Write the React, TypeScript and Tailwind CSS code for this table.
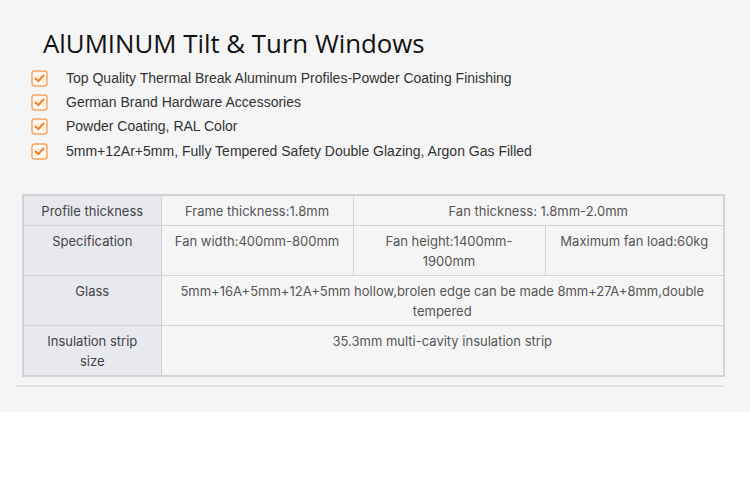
import React from "react";

const Check = () => (
  <svg width="17" height="17" viewBox="0 0 17 17" className="shrink-0">
    <rect x="1" y="1" width="15" height="15" rx="2.5" fill="#fff6ee" stroke="#f7a25c" strokeWidth="1.4" />
    <path d="M4.6 8.6 L7.3 11.1 L12.4 5.6" fill="none" stroke="#f27a1a" strokeWidth="2" strokeLinecap="round" strokeLinejoin="round" />
  </svg>
);

const items = [
  "Top Quality Thermal Break Aluminum Profiles-Powder Coating Finishing",
  "German Brand Hardware Accessories",
  "Powder Coating, RAL Color",
  "5mm+12Ar+5mm, Fully Tempered Safety Double Glazing, Argon Gas Filled",
];

const th = "border border-[#d3d3d3] bg-[#e8e8ef] text-[#444] align-top text-center px-2 pt-[5px] pb-[4px] font-normal";
const td = "border border-[#d3d3d3] text-[#555] align-top text-center px-2 pt-[5px] pb-[4px]";

export default function App() {
  return (
    <div className="w-[750px] h-[478px] bg-white">
      <div className="h-[412px] bg-[#f5f5f5] pt-[26px]">
        <h1
          className="ml-[43px] text-[25.8px] leading-[34px] text-[#111]"
          style={{ fontFamily: '"Open Sans", sans-serif' }}
        >
          AlUMINUM Tilt &amp; Turn Windows
        </h1>
        <ul className="mt-[10px] ml-[31px] flex flex-col gap-[7.2px]" style={{ fontFamily: '"Liberation Sans", Arial, sans-serif' }}>
          {items.map((t) => (
            <li key={t} className="flex items-center h-[17px] text-[14px] text-[#333]">
              <Check />
              <span className="ml-[18px]">{t}</span>
            </li>
          ))}
        </ul>
        <table
          className="mt-[34px] ml-[22px] w-[703px] border-collapse table-fixed text-[13px] leading-[20px] border-2 border-[#d3d3d3]"
          style={{ fontFamily: 'Inter, sans-serif' }}
        >
          <colgroup>
            <col className="w-[138px]" />
            <col className="w-[192px]" />
            <col className="w-[192px]" />
            <col />
          </colgroup>
          <tbody>
            <tr>
              <th className={th}>Profile thickness</th>
              <td className={td}>Frame thickness:1.8mm</td>
              <td className={td} colSpan={2}>Fan thickness: 1.8mm-2.0mm</td>
            </tr>
            <tr>
              <th className={th}>Specification<br />&nbsp;</th>
              <td className={td}>Fan width:400mm-800mm</td>
              <td className={td}>Fan height:1400mm-<br />1900mm</td>
              <td className={td}>Maximum fan load:60kg</td>
            </tr>
            <tr>
              <th className={th}>Glass<br />&nbsp;</th>
              <td className={td} colSpan={3}>
                5mm+16A+5mm+12A+5mm hollow,brolen edge can be made 8mm+27A+8mm,double<br />tempered
              </td>
            </tr>
            <tr>
              <th className={th}>Insulation strip<br />size</th>
              <td className={td} colSpan={3}>35.3mm multi-cavity insulation strip</td>
            </tr>
          </tbody>
        </table>
        <div className="mt-[8px] ml-[15px] w-[709px] h-[2px] bg-[#e2e2e2]" />
      </div>
    </div>
  );
}
